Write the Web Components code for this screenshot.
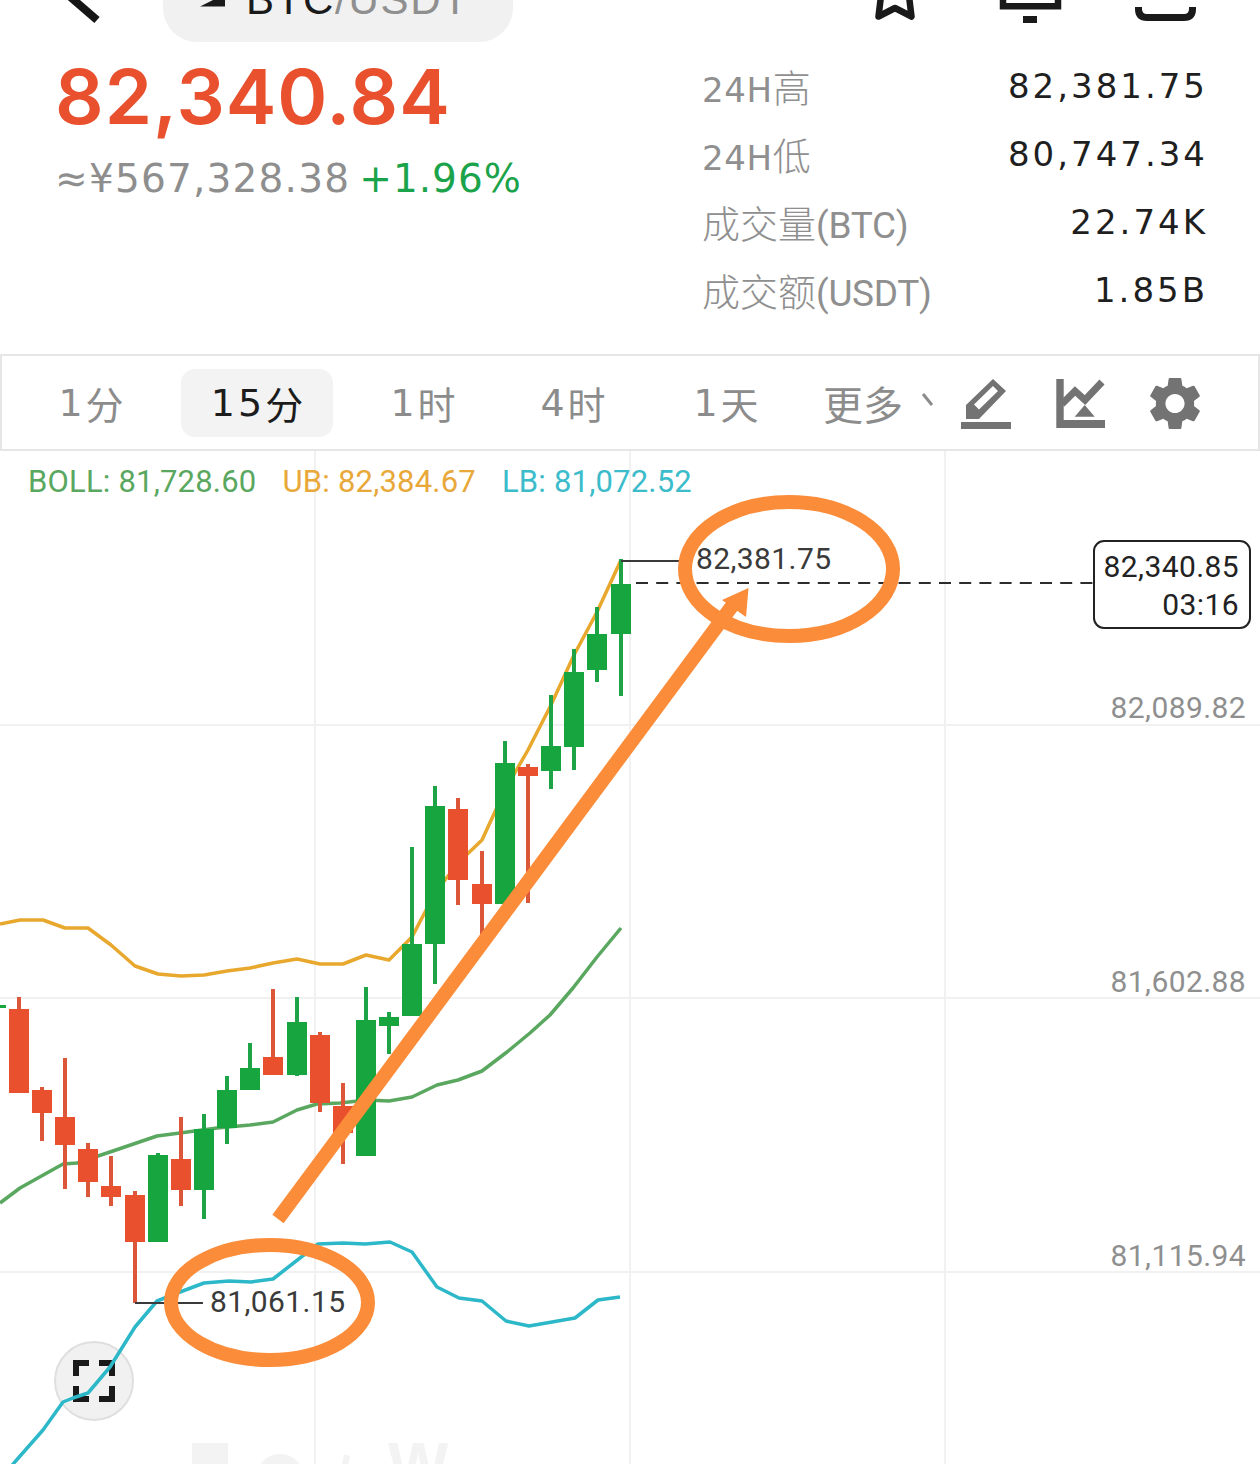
<!DOCTYPE html>
<html lang="zh-CN">
<head>
<meta charset="UTF-8">
<title>BTC/USDT</title>
<style>
  html, body { margin: 0; padding: 0; background: #fff; }
  body { width: 1260px; height: 1464px; overflow: hidden; font-family: "DejaVu Sans", "Noto Sans CJK SC", sans-serif; }
  stat-row .lat { font-family: Roboto, sans-serif; font-size: 37px; letter-spacing: -.3px; }
  stat-row .cjk { font-family: "Noto Sans CJK SC", sans-serif; font-weight: 300; font-size: 38px; letter-spacing: 0; }
</style>
</head>
<body>
<top-bar></top-bar>
<price-section>
  <stat-row><span slot="label">24H<span class="cjk">高</span></span><span slot="value">82,381.75</span></stat-row>
  <stat-row><span slot="label">24H<span class="cjk">低</span></span><span slot="value">80,747.34</span></stat-row>
  <stat-row><span slot="label"><span class="cjk">成交量</span><span class="lat">(BTC)</span></span><span slot="value">22.74K</span></stat-row>
  <stat-row><span slot="label"><span class="cjk">成交额</span><span class="lat">(USDT)</span></span><span slot="value">1.85B</span></stat-row>
</price-section>
<period-bar></period-bar>
<kline-chart></kline-chart>

<script>
  class TopBar extends HTMLElement {
    constructor() {
      super();
      this.attachShadow({mode: 'open'}).innerHTML = `
        <style>
          :host { display: flex; height: 42px; overflow: hidden; position: relative; align-items: flex-start; }
          svg { display: block; flex: none; }
          .pill {
            flex: none; width: 350px; height: 84px; margin: -42px 0 0 63px;
            background: #f1f1f1; border-radius: 34px; box-sizing: border-box;
            display: flex; align-items: flex-end; padding: 0 0 20px 37px; gap: 20px;
          }
          .name { font: 42px/44px "Liberation Sans", sans-serif; letter-spacing: 1.7px; color: #8f8f8f; white-space: nowrap; }
          .name b { font-weight: 400; color: #1a1a1a; }
          .tools { display: flex; margin-left: 357px; }
        </style>
        <svg width="100" height="42" viewBox="0 0 100 42">
          <path d="M60 -12 L97 20" fill="none" stroke="#161616" stroke-width="8"/>
        </svg>
        <div class="pill">
          <svg width="26" height="42" viewBox="0 -34 26 42" style="margin-bottom:14px"><path d="M0 6.5 L13 0 L25 -8 V6.5Z" fill="#1a1a1a"/></svg>
          <span class="name"><b>BTC</b>/USDT</span>
        </div>
        <div class="tools">
          <svg width="50" height="42" viewBox="870 0 50 42"><path d="M881 -4 L878.5 16.5 L895 8 L911.5 16.5 L909 -4" fill="none" stroke="#1a1a1a" stroke-width="6.5" stroke-linejoin="round" stroke-linecap="round"/></svg>
          <svg width="80" height="42" viewBox="990 0 80 42" style="margin-left:70px"><path d="M1003 -6 V6.3 H1058 V-6" fill="none" stroke="#1a1a1a" stroke-width="6.5"/><rect x="1023" y="16" width="14" height="7" fill="#1a1a1a"/></svg>
          <svg width="70" height="42" viewBox="1130 0 70 42" style="margin-left:60px"><path d="M1138.5 7 V9 Q1138.5 17.5 1147 17.5 H1184 Q1192.5 17.5 1192.5 9 V7" fill="none" stroke="#1a1a1a" stroke-width="7"/></svg>
        </div>`;
    }
  }
  customElements.define('top-bar', TopBar);

  class PriceSection extends HTMLElement {
    constructor() {
      super();
      this.attachShadow({mode: 'open'}).innerHTML = `
        <style>
          :host { display: flex; height: 312px; box-sizing: border-box; padding-left: 55px; }
          .left { width: 647px; flex: none; }
          .price { font: 600 76px/92px Inter, sans-serif; letter-spacing: 1px; color: #e8502e; margin-top: 8px; white-space: nowrap; }
          .sub { font: 39px/46px "DejaVu Sans", sans-serif; letter-spacing: 1.2px; color: #8e8e8e; margin-top: 14px; white-space: nowrap; display: flex; gap: 9px; }
          .sub span { color: #1aa34a; letter-spacing: 1px; }
          .right { width: 503px; padding-top: 12px; }
        </style>
        <div class="left">
          <div class="price">82,340.84</div>
          <div class="sub">≈¥567,328.38<span>+1.96%</span></div>
        </div>
        <div class="right"><slot></slot></div>`;
    }
  }
  customElements.define('price-section', PriceSection);

  class StatRow extends HTMLElement {
    constructor() {
      super();
      this.attachShadow({mode: 'open'}).innerHTML = `
        <style>
          :host { display: flex; height: 68px; align-items: center; justify-content: space-between; white-space: nowrap; }
          .k { font-size: 34px; letter-spacing: .6px; color: #8f8f8f; margin-top: -6px; }
          .v { font-size: 34px; letter-spacing: 3px; margin-right: -3px; color: #1f1f1f; margin-top: -5px; }
        </style>
        <div class="k"><slot name="label"></slot></div>
        <div class="v"><slot name="value"></slot></div>`;
    }
  }
  customElements.define('stat-row', StatRow);

  class PeriodTab extends HTMLElement {
    static get observedAttributes() { return ['w']; }
    constructor() {
      super();
      this.attachShadow({mode: 'open'}).innerHTML = `
        <style>
          :host { display: flex; align-items: center; justify-content: center; height: 68px; flex: none; font-size: 38px; color: #8c8c8c; white-space: nowrap; letter-spacing: 3px; border-radius: 14px; }
          :host([active]) { color: #1c1c1c; background: #f3f3f3; }
        </style>
        <slot></slot>`;
    }
    attributeChangedCallback(n, o, v) { this.style.width = v + 'px'; }
  }
  customElements.define('period-tab', PeriodTab);

  class PeriodBar extends HTMLElement {
    constructor() {
      super();
      this.attachShadow({mode: 'open'}).innerHTML = `
        <style>
          :host { display: flex; box-sizing: border-box; height: 97px; align-items: center; border: 2px solid #e6e6e6; padding-left: 6px; overflow: hidden; }
          period-tab span { font-family: "Noto Sans CJK SC", sans-serif; letter-spacing: 0; }
          .more { font: 40px "Noto Sans CJK SC", sans-serif; color: #8c8c8c; width: 90px; margin-left: 11px; flex: none; white-space: nowrap; }
          svg { display: block; flex: none; }
        </style>
        <period-tab w="166">1<span>分</span></period-tab>
        <period-tab w="152" active style="margin:0 7px">15<span>分</span></period-tab>
        <period-tab w="166">1<span>时</span></period-tab>
        <period-tab w="134">4<span>时</span></period-tab>
        <period-tab w="172">1<span>天</span></period-tab>
        <div class="more">更多</div>
        <svg width="298" height="60" viewBox="915 372 298 60">
          <path d="M925 393 L934 404" fill="none" stroke="#8c8c8c" stroke-width="3"/>
          <path fill-rule="evenodd" fill="#737373" d="M995 378 L1008 390 L981 418 H968 V404Z M976 403.5 L981 408.5 L1000 390 L995 385Z"/>
          <rect x="963" y="421" width="50" height="7" fill="#737373"/>
          <path fill="#737373" d="M1058.3 378 H1065.7 V419 H1107 V427 H1058.3Z"/>
          <path fill="none" stroke="#737373" stroke-width="7" d="M1064 403 L1077 390 L1087 399 L1104 381"/>
          <path fill="#737373" d="M1086.7 404 L1096.7 415.7 H1076.7Z"/>
          <path fill="#737373" transform="translate(1177 402.5) scale(2.66) translate(-12 -12)" d="M19.14 12.94c.04-.3.06-.61.06-.94 0-.32-.02-.64-.07-.94l2.03-1.58c.18-.14.23-.41.12-.61l-1.92-3.32c-.12-.22-.37-.29-.59-.22l-2.39.96c-.5-.38-1.03-.7-1.62-.94l-.36-2.54c-.04-.24-.24-.41-.48-.41h-3.84c-.24 0-.43.17-.47.41l-.36 2.54c-.59.24-1.13.57-1.62.94l-2.39-.96c-.22-.08-.47 0-.59.22L2.74 8.87c-.12.21-.08.47.12.61l2.03 1.58c-.05.3-.09.63-.09.94s.02.64.07.94l-2.03 1.58c-.18.14-.23.41-.12.61l1.92 3.32c.12.22.37.29.59.22l2.39-.96c.5.38 1.03.7 1.62.94l.36 2.54c.05.24.24.41.48.41h3.84c.24 0 .44-.17.47-.41l.36-2.54c.59-.24 1.13-.56 1.62-.94l2.39.96c.22.08.47 0 .59-.22l1.92-3.32c.12-.22.07-.47-.12-.61l-2.01-1.58zM12 15.6c-1.98 0-3.6-1.62-3.6-3.6s1.62-3.6 3.6-3.6 3.6 1.62 3.6 3.6-1.62 3.6-3.6 3.6z"/>
        </svg>`;
    }
  }
  customElements.define('period-bar', PeriodBar);

  // x, body top, body bottom, wick top, wick bottom, colour
  const candles = [
    [19, 1009, 1093, 997, 1093, 'r'], [42, 1090, 1113, 1087, 1141, 'r'], [65, 1117, 1145, 1058, 1189, 'r'],
    [88, 1149, 1182, 1143, 1197, 'r'], [111, 1186, 1197, 1156, 1206, 'r'], [135, 1195, 1242, 1191, 1303, 'r'],
    [158, 1155, 1242, 1153, 1242, 'g'], [181, 1159, 1190, 1117, 1206, 'r'], [204, 1129, 1190, 1114, 1219, 'g'],
    [227, 1090, 1128, 1076, 1144, 'g'], [250, 1068, 1090, 1043, 1090, 'g'], [273, 1057, 1075, 989, 1075, 'r'],
    [297, 1022, 1075, 997, 1076, 'g'], [320, 1035, 1103, 1032, 1112, 'r'], [343, 1106, 1133, 1083, 1164, 'r'],
    [366, 1020, 1156, 987, 1156, 'g'], [389, 1017, 1026, 1012, 1054, 'g'], [412, 944, 1016, 847, 1016, 'g'],
    [435, 806, 944, 786, 984, 'g'], [458, 809, 880, 798, 905, 'r'], [482, 884, 904, 851, 935, 'r'],
    [505, 763, 904, 741, 904, 'g'], [528, 767, 776, 764, 903, 'r'], [551, 746, 771, 695, 789, 'g'],
    [574, 672, 747, 649, 770, 'g'], [597, 634, 670, 607, 682, 'g'], [621, 584, 634, 559, 696, 'g']
  ];
  const ub = '0,924 20,920 43,920 65,928 88,928 111,945 135,966 158,974 181,976 204,975 227,971 250,968 273,963 297,959 320,964 343,964 366,955 389,960 412,937 435,893 458,863 482,840 505,790 528,750 551,705 574,655 597,612 621,560';
  const boll = '0,1203 20,1188 63,1164 77,1163 110,1152 157,1136 180,1133 217,1128 250,1125 273,1122 297,1110 317,1104 340,1103 367,1100 389,1101 412,1097 437,1085 458,1080 482,1071 507,1052 530,1033 550,1015 573,988 597,957 621,928';
  const lb = '0,1480 14,1463 43,1430 63,1402 73,1398 88,1393 110,1367 135,1327 157,1301 180,1292 204,1283 229,1281 251,1282 273,1279 318,1244 343,1243 365,1244 390,1242 412,1252 437,1287 459,1298 482,1301 506,1321 529,1326 575,1318 598,1300 620,1297';

  class ChartLegend extends HTMLElement {
    constructor() {
      super();
      this.attachShadow({mode: 'open'}).innerHTML = `
        <style>
          :host { display: flex; gap: 26px; position: absolute; left: 28px; top: 13px; font: 31px/36px Roboto, sans-serif; letter-spacing: .2px; white-space: nowrap; }
        </style>
        <span style="color:#5aa760">BOLL: 81,728.60</span>
        <span style="color:#e8a83a">UB: 82,384.67</span>
        <span style="color:#3cbccb">LB: 81,072.52</span>`;
    }
  }
  customElements.define('chart-legend', ChartLegend);

  class FullscreenButton extends HTMLElement {
    constructor() {
      super();
      this.attachShadow({mode: 'open'}).innerHTML = `
        <style>
          :host { display: flex; position: absolute; left: 54px; top: 890px; width: 80px; height: 80px; box-sizing: border-box; border-radius: 50%; background: #f1f1f1; border: 2px solid #dfdfdf; align-items: center; justify-content: center; }
        </style>
        <svg width="42" height="42" viewBox="0 0 42 42" fill="none" stroke="#1a1a1a" stroke-width="6">
          <path d="M3 16 V3 H16 M26 3 H39 V16 M39 26 V39 H26 M16 39 H3 V26"/>
        </svg>`;
    }
  }
  customElements.define('fullscreen-button', FullscreenButton);

  class KlineChart extends HTMLElement {
    constructor() {
      super();
      const bars = candles.map(([x, t, b, wt, wb, c]) => {
        const fill = c === 'g' ? '#17a53f' : '#e8502e';
        const wick = c === 'g' ? '#1fa347' : '#dc5639';
        return `<rect x="${x - 2}" y="${wt}" width="4" height="${wb - wt}" fill="${wick}"/>` +
               `<rect x="${x - 10}" y="${t}" width="20" height="${b - t}" fill="${fill}"/>`;
      }).join('');
      this.attachShadow({mode: 'open'}).innerHTML = `
        <style>
          :host { display: block; position: relative; height: 1013px; overflow: hidden; }
          svg { position: absolute; left: 0; top: 0; display: block; }
          text { font: 30px Roboto, sans-serif; letter-spacing: .4px; }
          .axis { fill: #8f8f8f; text-anchor: end; }
          .tag { fill: #222; text-anchor: end; }
          .mark { fill: #3a3a3a; }
        </style>
        <svg width="1260" height="1013" viewBox="0 451 1260 1013">
          <g stroke="#f1f1f1" stroke-width="2">
            <path d="M0 725 H1260 M0 998 H1260 M0 1272 H1260 M315 451 V1464 M630 451 V1464 M945 451 V1464"/>
          </g>
          <g fill="#f3f3f3">
            <rect x="192" y="1443" width="36" height="30"/>
            <ellipse cx="280" cy="1478" rx="24" ry="24"/>
            <rect x="343" y="1455" width="6" height="14" transform="rotate(15 346 1460)"/>
            <text x="388" y="1488" style="font:700 64px 'Liberation Sans',sans-serif">W</text>
          </g>
        </svg>
        <fullscreen-button></fullscreen-button>
        <svg width="1260" height="1013" viewBox="0 451 1260 1013">
          <g fill="none" stroke-width="3.5" stroke-linejoin="round">
            <polyline points="${ub}" stroke="#e8a82e"/>
            <polyline points="${boll}" stroke="#5aa760"/>
            <polyline points="${lb}" stroke="#2cb8c8"/>
          </g>
          <rect x="0" y="1005" width="6" height="3" fill="#17a53f"/>
          ${bars}
          <path d="M621 561 H690" stroke="#3a3a3a" stroke-width="2"/>
          <path d="M135 1303 H203" stroke="#3a3a3a" stroke-width="2"/>
          <path d="M636 583 H1094" stroke="#2c2c2c" stroke-width="2" stroke-dasharray="12 8.2"/>
          <text class="mark" x="696" y="569">82,381.75</text>
          <text class="mark" x="210" y="1312">81,061.15</text>
          <text class="axis" x="1246" y="718">82,089.82</text>
          <text class="axis" x="1246" y="992">81,602.88</text>
          <text class="axis" x="1246" y="1266">81,115.94</text>
          <rect x="1094" y="541" width="156" height="87" rx="10" fill="#fff" stroke="#222" stroke-width="2"/>
          <text class="tag" x="1239" y="577">82,340.85</text>
          <text class="tag" x="1239" y="615">03:16</text>
          <g fill="none" stroke="#fb8c3a" stroke-width="14">
            <ellipse cx="789" cy="569" rx="104" ry="67"/>
            <ellipse cx="269.5" cy="1302.5" rx="98.5" ry="57.5"/>
          </g>
          <path d="M278 1219 L735 602" stroke="#fb8c3a" stroke-width="14" fill="none"/>
          <path d="M748.5 588 L722 600 L746 617Z" fill="#fb8c3a"/>
        </svg>
        <chart-legend></chart-legend>`;
    }
  }
  customElements.define('kline-chart', KlineChart);
</script>
</body>
</html>
